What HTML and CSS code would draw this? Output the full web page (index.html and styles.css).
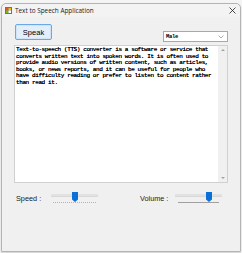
FILE: index.html
```html
<!DOCTYPE html>
<html lang="en">
<head>
    <meta charset="UTF-8">
    <meta name="viewport" content="width=device-width, initial-scale=1.0">
    <title>Text to Speech Application</title>
    <link rel="stylesheet" href="styles.css">
</head>
<body>

<div class="window">
    <div class="titlebar">
        <svg class="app-icon" width="7" height="7" viewBox="0 0 7 7">
            <rect x="0" y="0" width="7" height="7" fill="#3a7bd5"/>
            <rect x="1" y="1" width="2.5" height="2.5" fill="#f25022"/>
            <rect x="3.5" y="1" width="2.5" height="2.5" fill="#ffb900"/>
            <rect x="1" y="3.5" width="2.5" height="2.5" fill="#7fba00"/>
            <rect x="3.5" y="3.5" width="2.5" height="2.5" fill="#ffffff"/>
        </svg>
        <span class="title">Text to Speech Application</span>
        <svg class="close-btn" width="7" height="7" viewBox="0 0 7 7">
            <path d="M0.5 0.5 L6.5 6.5 M6.5 0.5 L0.5 6.5" stroke="#222" stroke-width="0.8" fill="none"/>
        </svg>
    </div>

    <div class="content">
        <div class="top-row">
            <button class="speak-btn">Speak</button>
            <div class="voice-select">
                <span>Male</span>
                <svg width="6" height="4" viewBox="0 0 6 4">
                    <path d="M0.5 0.5 L3 3 L5.5 0.5" stroke="#8a8a8a" stroke-width="0.7" fill="none"/>
                </svg>
            </div>
        </div>

        <div class="text-box">
            <div class="text-input">Text-to-speech (TTS) converter is a software or service that converts written text into spoken words. It is often used to provide audio versions of written content, such as articles, books, or news reports, and it can be useful for people who have difficulty reading or prefer to listen to content rather than read it.</div>
            <div class="scrollbar">
                <span class="arrow up"></span>
                <span class="arrow down"></span>
            </div>
        </div>

        <div class="controls">
            <div class="control speed">
                <span class="control-label">Speed :</span>
                <div class="slider">
                    <div class="track"></div>
                    <svg class="thumb" style="left: 21px" width="6" height="10" viewBox="0 0 6 10">
                        <path d="M0 0 H6 V7.5 L3 10 L0 7.5 Z" fill="#0a6fd6"/>
                    </svg>
                    <div class="ticks dotted"></div>
                </div>
            </div>
            <div class="control volume">
                <span class="control-label">Volume :</span>
                <div class="slider">
                    <div class="track"></div>
                    <svg class="thumb" style="left: 31px" width="6" height="10" viewBox="0 0 6 10">
                        <path d="M0 0 H6 V7.5 L3 10 L0 7.5 Z" fill="#0a6fd6"/>
                    </svg>
                    <div class="ticks solid"></div>
                </div>
            </div>
        </div>
    </div>
</div>

</body>
</html>
```

FILE: styles.css
```css
body {
    margin: 0;
    width: 242px;
    height: 253px;
    background-color: #f4f4f4;
    font-family: 'Liberation Sans', Arial, sans-serif;
    overflow: hidden;
}
.window {
    margin: 3px 1px 0 1px;
    height: 247px;
    background: #f0f0f0;
    border: 1px solid #b4b4b4;
    border-radius: 5px 5px 1px 1px;
    box-shadow: 0 1px 2px rgba(0, 0, 0, 0.15);
    display: flex;
    flex-direction: column;
}
.titlebar {
    height: 13px;
    display: flex;
    align-items: center;
    padding: 0 4px 0 3px;
    background: #f3f3f3;
    border-radius: 5px 5px 0 0;
}
.app-icon {
    margin-right: 3px;
}
.title {
    font-family: 'Open Sans', sans-serif;
    font-size: 6.4px;
    color: #1a1a1a;
}
.close-btn {
    margin-left: auto;
}
.content {
    padding: 7px 12px 0 12px;
}
.top-row {
    height: 18px;
    display: flex;
    align-items: flex-end;
}
.speak-btn {
    width: 37px;
    height: 16px;
    margin: 0 0 2px 1px;
    padding: 0;
    font-family: 'Liberation Sans', Arial, sans-serif;
    font-size: 7.5px;
    color: #000;
    background: #e3eef9;
    border: 1px solid #6aa9e8;
    border-radius: 2px;
    box-shadow: inset 0 0 0 1px #cfe4f8;
}
.voice-select {
    margin-left: auto;
    width: 65px;
    height: 11px;
    box-sizing: border-box;
    background: #fff;
    border: 1px solid #a8a8a8;
    display: flex;
    align-items: center;
    justify-content: space-between;
    padding: 0 3px 0 2px;
    font-family: 'Liberation Mono', monospace;
    font-weight: bold;
    font-size: 5.5px;
    letter-spacing: -0.3px;
}
.text-box {
    margin-top: 3px;
    height: 138px;
    box-sizing: border-box;
    background: #fff;
    border: 1px solid #d0d0d0;
    display: flex;
}
.text-input {
    flex: 1;
    padding: 1px 2px 0 1px;
    font-family: 'Liberation Mono', monospace;
    font-size: 6px;
    letter-spacing: -0.4px;
    line-height: 6.5px;
    color: #000;
    text-shadow: 0 0 0.3px #000;
}
.scrollbar {
    width: 9px;
    background: #f0f0f0;
    display: flex;
    flex-direction: column;
    justify-content: space-between;
    align-items: center;
    padding: 3px 0;
}
.arrow {
    width: 0;
    height: 0;
    border-left: 2px solid transparent;
    border-right: 2px solid transparent;
}
.arrow.up {
    border-bottom: 2px solid #a3a3a3;
}
.arrow.down {
    border-top: 2px solid #a3a3a3;
}
.controls {
    margin-top: 8px;
    display: flex;
    padding-left: 2px;
}
.control {
    display: flex;
    align-items: flex-start;
    flex: none;
}
.control.speed {
    width: 124px;
}
.control-label {
    width: 35px;
    margin-top: 2px;
    font-size: 7.3px;
    line-height: 12px;
    color: #1a1a1a;
}
.slider {
    position: relative;
    width: 47px;
    height: 12px;
}
.track {
    margin-top: 3px;
    height: 2px;
    background: #e2e2e2;
    border-bottom: 1px solid #d8d8d8;
}
.thumb {
    position: absolute;
    top: 1px;
}
.ticks {
    position: absolute;
    left: 2px;
    right: 2px;
    top: 11px;
    height: 0;
}
.ticks.dotted {
    border-top: 1px dotted #b4b4b4;
}
.ticks.solid {
    left: 3px;
    right: 3px;
    border-top: 1px solid #a0a0a0;
}
```
